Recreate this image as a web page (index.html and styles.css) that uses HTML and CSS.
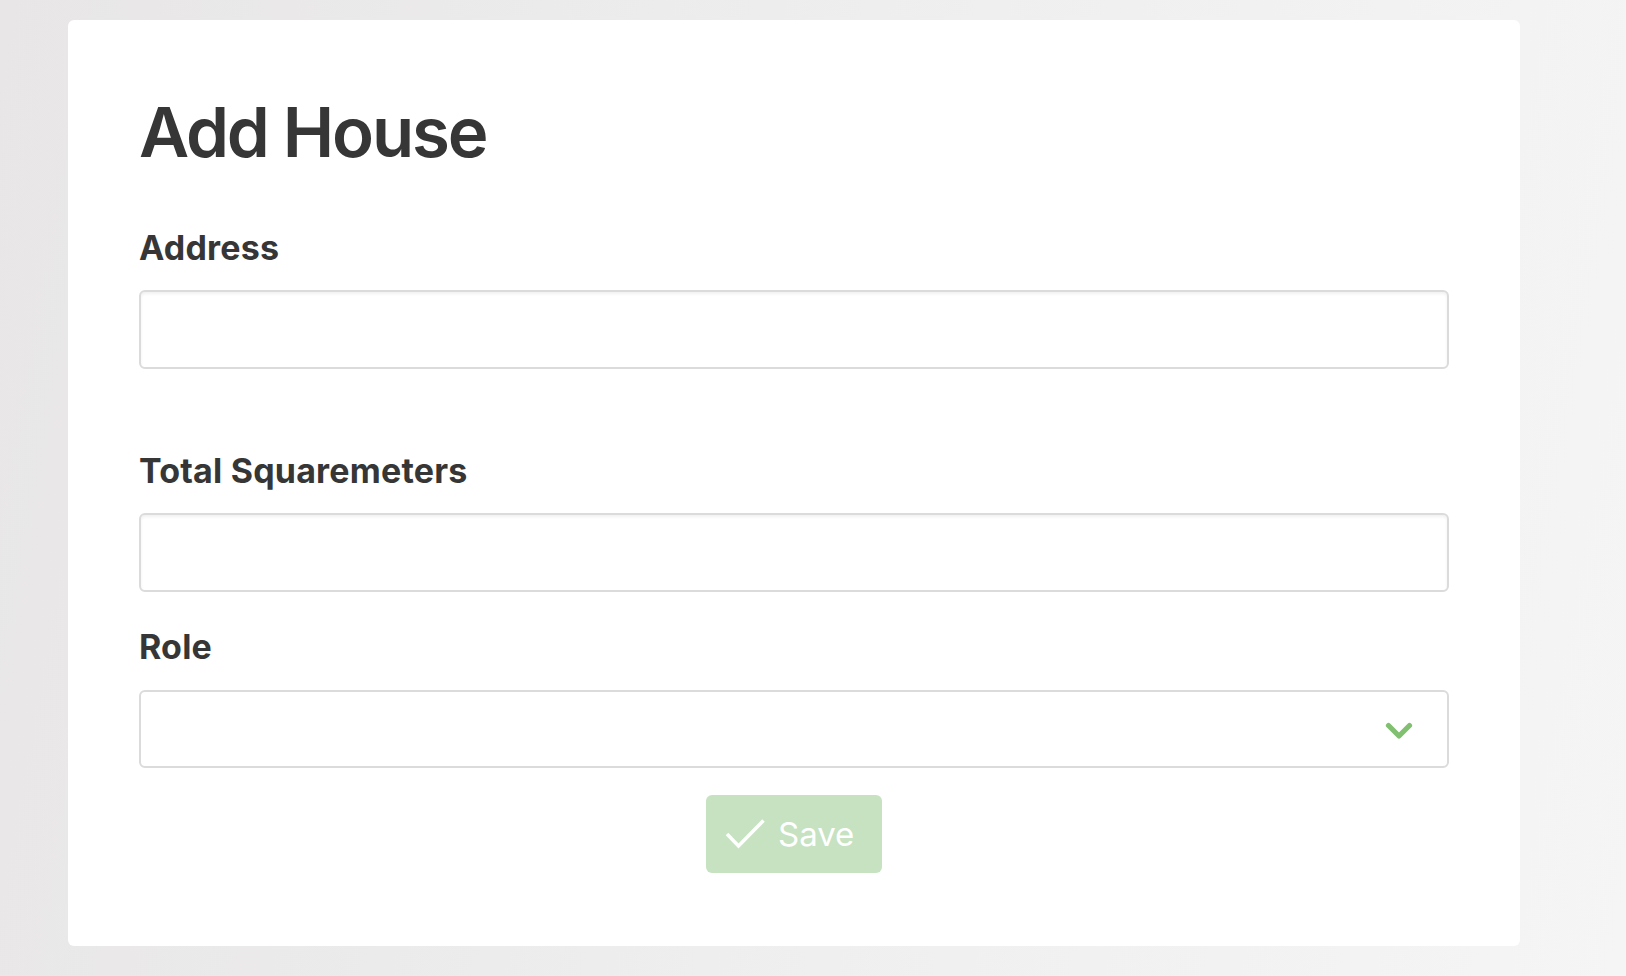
FILE: index.html
```html
<!DOCTYPE html>
<html lang="en">
<head>
<meta charset="utf-8">
<title>Add House</title>
<link rel="stylesheet" href="styles.css">
</head>
<body>
  <main class="card">
    <h1 class="title">Add House</h1>
    <div class="field field-first">
      <label class="label">Address</label>
      <input class="input" type="text">
    </div>
    <div class="field">
      <label class="label">Total Squaremeters</label>
      <input class="input" type="text">
    </div>
    <div class="field field-role">
      <label class="label">Role</label>
      <div class="select">
        <select class="select-box"><option></option></select>
        <svg class="chevron" width="28" height="18" viewBox="0 0 28 18"><polyline points="3.5,3.5 14,14 24.5,3.5" fill="none" stroke="#80c070" stroke-width="5.2" stroke-linecap="round" stroke-linejoin="round"/></svg>
      </div>
    </div>
    <div class="actions">
      <button class="button" disabled>
        <svg class="check" width="40" height="30" viewBox="0 0 40 30"><polyline points="2,15 13.5,27 38.5,1.5" fill="none" stroke="#ffffff" stroke-width="3.6"/></svg>
        <span>Save</span>
      </button>
    </div>
  </main>
</body>
</html>
```

FILE: styles.css
```css
html, body {
  margin: 0;
  padding: 0;
}
body {
  width: 1626px;
  height: 976px;
  overflow: hidden;
  background: linear-gradient(100deg, #e8e6e6 0%, #efefef 55%, #f5f5f5 100%);
  font-family: "Inter", "Liberation Sans", sans-serif;
  color: #363636;
  padding: 20px 0 0 68px;
  box-sizing: border-box;
}
.card {
  width: 1452px;
  height: 926px;
  box-sizing: border-box;
  background: #ffffff;
  border-radius: 6px;
  padding: 70px 71px 0 71px;
}
.title {
  margin: 0 0 54px 0;
  font-size: 69px;
  line-height: 84px;
  font-weight: 600;
  letter-spacing: -2.2px;
}
.field {
  display: flex;
  flex-direction: column;
  margin-bottom: 35px;
}
.field-first {
  margin-bottom: 82px;
}
.label {
  font-size: 34px;
  line-height: 40px;
  font-weight: 700;
  letter-spacing: 0.2px;
  margin-bottom: 22px;
}
.field-role .label {
  margin-bottom: 23px;
}
.input, .select-box {
  height: 79px;
  box-sizing: border-box;
  border: 2px solid #dbdbdb;
  border-radius: 6px;
  box-shadow: inset 0 2px 3px rgba(10, 10, 10, 0.06);
  background: #fff;
  font-size: 30px;
  font-family: inherit;
  padding: 0 20px;
  outline: none;
  width: 100%;
}
.select {
  position: relative;
  height: 78px;
}
.select-box {
  height: 78px;
  appearance: none;
  -webkit-appearance: none;
  box-shadow: none;
}
.chevron {
  position: absolute;
  right: 36px;
  top: 32px;
  pointer-events: none;
}
.actions {
  display: flex;
  justify-content: center;
  margin-top: -8px;
}
.button {
  width: 176px;
  height: 78px;
  box-sizing: border-box;
  border: none;
  border-radius: 6px;
  background: #c6e2c1;
  color: #ffffff;
  display: flex;
  align-items: center;
  padding: 0 0 0 19px;
  font-family: inherit;
  font-size: 33px;
  font-weight: 400;
  gap: 13px;
}
.check {
  flex: none;
}
```
